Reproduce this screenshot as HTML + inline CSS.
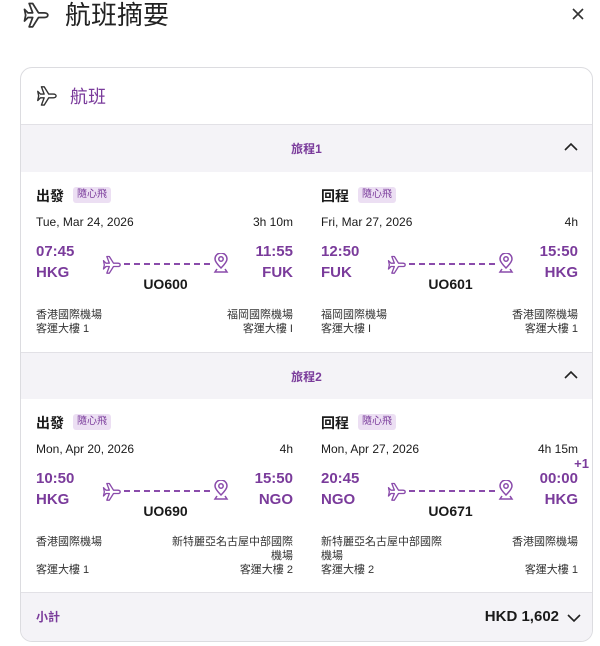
<!DOCTYPE html>
<html><head><meta charset="utf-8"><style>
*{margin:0;padding:0;box-sizing:border-box}
body{width:600px;height:646px;background:#fff;font-family:"Liberation Sans","Noto Sans CJK TC",sans-serif;color:#1a1a1a;position:relative;overflow:hidden}
.a{position:absolute;white-space:nowrap}
.card{position:absolute;left:20px;top:67px;width:573px;height:575px;border:1px solid #dcdce0;border-radius:12px;overflow:hidden;background:#fff}
.bar{position:absolute;left:0;width:100%;background:#f4f3f7;border-top:1px solid #e2e1e6}
.p{color:#7a3b9b}
.leg{position:absolute;width:257px;height:180px}
.leg .t{left:0;top:15px;font-size:14px;font-weight:bold}
.leg .tag{left:37px;top:16px;font-size:10px;color:#7a3b9b;background:#ecdff3;padding:1px 4px;border-radius:3px;line-height:14px}
.leg .d{top:44px;font-size:12px}
.leg .tm{top:72px;font-size:15px;font-weight:bold;color:#7a3b9b}
.leg .cd{top:93px;font-size:15px;font-weight:bold;color:#7a3b9b}
.leg .fn{top:105px;font-size:14px;font-weight:bold;left:0;width:257px;text-align:center;padding-left:2px}
.leg .ap{top:137px;font-size:11px;line-height:14px;color:#333}
.r{right:0;text-align:right}
.l{left:0}
.dash{position:absolute;left:88px;top:92px;width:86px;border-top:2px dashed #8a4bab}
</style></head><body>
<svg class="a" style="left:20px;top:0" width="30" height="28" viewBox="0 0 24 24" fill="none" stroke="#333" stroke-width="1.5" stroke-linejoin="round"><path d="M3 8 L6 11 L10 11 L7 3 L10 3 L15 11 L20 11 C22 11 23 12 23 13 C23 14 22 15 20 15 L15 15 L10 23 L7 23 L10 15 L6 15 L3 18 L4 13 Z"/></svg>
<div class="a" style="left:65px;top:-5px;font-size:26px;color:#222">航班摘要</div>
<svg class="a" style="left:572px;top:8px" width="12" height="12" viewBox="0 0 12 12"><path d="M1 1 L11 11 M11 1 L1 11" stroke="#333" stroke-width="1.6"/></svg>
<div class="card">
<svg class="a" style="left:14px;top:16px" width="22" height="22" viewBox="0 0 24 24" fill="none" stroke="#333" stroke-width="1.5" stroke-linejoin="round"><path d="M3 8 L6 11 L10 11 L7 3 L10 3 L15 11 L20 11 C22 11 23 12 23 13 C23 14 22 15 20 15 L15 15 L10 23 L7 23 L10 15 L6 15 L3 18 L4 13 Z"/></svg>
<div class="a p" style="left:49px;top:15px;font-size:18px">航班</div>
<div class="bar" style="top:56px;height:48px"><div class="a p" style="left:0;width:100%;text-align:center;top:15px;font-size:12px;font-weight:bold">旅程1</div><svg class="a" style="left:543px;top:17px" width="14" height="10" viewBox="0 0 14 10"><path d="M1 8 L7 2 L13 8" fill="none" stroke="#222" stroke-width="1.6"/></svg></div>
<div class="bar" style="top:284px;height:47px"><div class="a p" style="left:0;width:100%;text-align:center;top:15px;font-size:12px;font-weight:bold">旅程2</div><svg class="a" style="left:543px;top:17px" width="14" height="10" viewBox="0 0 14 10"><path d="M1 8 L7 2 L13 8" fill="none" stroke="#222" stroke-width="1.6"/></svg></div>
<div class="bar" style="top:524px;height:51px"><div class="a p" style="left:15px;top:15px;font-size:12px;font-weight:bold">小計</div><div class="a" style="right:33px;top:15px;font-size:15px;font-weight:bold">HKD 1,602</div><svg class="a" style="left:546px;top:20px" width="14" height="10" viewBox="0 0 14 10"><path d="M1 2 L7 8 L13 2" fill="none" stroke="#222" stroke-width="1.6"/></svg></div>
</div>
<div class="leg" style="left:36px;top:171px">
<div class="a t">出發</div><div class="a tag">隨心飛</div>
<div class="a d l">Tue, Mar 24, 2026</div><div class="a d r">3h 10m</div>
<div class="a tm l">07:45</div><div class="a tm r">11:55</div>
<div class="a cd l">HKG</div><div class="a cd r">FUK</div>
<svg class="a" style="left:64px;top:83px" width="22" height="20" viewBox="0 0 24 24" fill="none" stroke="#8a4bab" stroke-width="1.6" stroke-linejoin="round"><path d="M3 8 L6 11 L10 11 L7 3 L10 3 L15 11 L20 11 C22 11 23 12 23 13 C23 14 22 15 20 15 L15 15 L10 23 L7 23 L10 15 L6 15 L3 18 L4 13 Z"/></svg>
<div class="dash"></div>
<svg class="a" style="left:177px;top:82px" width="16" height="20" viewBox="0 0 16 20" fill="none" stroke="#8a4bab" stroke-width="1.5"><path d="M8 15 C4 11 2 8 2 6 A6 6 0 0 1 14 6 C14 8 12 11 8 15Z"/><circle cx="8" cy="6" r="2.2"/><path d="M4 16 L2 19 L14 19 L12 16"/></svg>
<div class="a fn">UO600</div>
<div class="a ap l">香港國際機場<br>客運大樓 1</div><div class="a ap r">福岡國際機場<br>客運大樓 I</div>
</div>
<div class="leg" style="left:321px;top:171px">
<div class="a t">回程</div><div class="a tag">隨心飛</div>
<div class="a d l">Fri, Mar 27, 2026</div><div class="a d r">4h</div>
<div class="a tm l">12:50</div><div class="a tm r">15:50</div>
<div class="a cd l">FUK</div><div class="a cd r">HKG</div>
<svg class="a" style="left:64px;top:83px" width="22" height="20" viewBox="0 0 24 24" fill="none" stroke="#8a4bab" stroke-width="1.6" stroke-linejoin="round"><path d="M3 8 L6 11 L10 11 L7 3 L10 3 L15 11 L20 11 C22 11 23 12 23 13 C23 14 22 15 20 15 L15 15 L10 23 L7 23 L10 15 L6 15 L3 18 L4 13 Z"/></svg>
<div class="dash"></div>
<svg class="a" style="left:177px;top:82px" width="16" height="20" viewBox="0 0 16 20" fill="none" stroke="#8a4bab" stroke-width="1.5"><path d="M8 15 C4 11 2 8 2 6 A6 6 0 0 1 14 6 C14 8 12 11 8 15Z"/><circle cx="8" cy="6" r="2.2"/><path d="M4 16 L2 19 L14 19 L12 16"/></svg>
<div class="a fn">UO601</div>
<div class="a ap l">福岡國際機場<br>客運大樓 I</div><div class="a ap r">香港國際機場<br>客運大樓 1</div>
</div>
<div class="leg" style="left:36px;top:398px">
<div class="a t">出發</div><div class="a tag">隨心飛</div>
<div class="a d l">Mon, Apr 20, 2026</div><div class="a d r">4h</div>
<div class="a tm l">10:50</div><div class="a tm r">15:50</div>
<div class="a cd l">HKG</div><div class="a cd r">NGO</div>
<svg class="a" style="left:64px;top:83px" width="22" height="20" viewBox="0 0 24 24" fill="none" stroke="#8a4bab" stroke-width="1.6" stroke-linejoin="round"><path d="M3 8 L6 11 L10 11 L7 3 L10 3 L15 11 L20 11 C22 11 23 12 23 13 C23 14 22 15 20 15 L15 15 L10 23 L7 23 L10 15 L6 15 L3 18 L4 13 Z"/></svg>
<div class="dash"></div>
<svg class="a" style="left:177px;top:82px" width="16" height="20" viewBox="0 0 16 20" fill="none" stroke="#8a4bab" stroke-width="1.5"><path d="M8 15 C4 11 2 8 2 6 A6 6 0 0 1 14 6 C14 8 12 11 8 15Z"/><circle cx="8" cy="6" r="2.2"/><path d="M4 16 L2 19 L14 19 L12 16"/></svg>
<div class="a fn">UO690</div>
<div class="a ap l">香港國際機場<br><br>客運大樓 1</div><div class="a ap r">新特麗亞名古屋中部國際<br>機場<br>客運大樓 2</div>
</div>
<div class="leg" style="left:321px;top:398px">
<div class="a t">回程</div><div class="a tag">隨心飛</div>
<div class="a d l">Mon, Apr 27, 2026</div><div class="a d r">4h 15m</div>
<div class="a p" style="right:-11px;top:58px;font-size:13px;font-weight:bold">+1</div>
<div class="a tm l">20:45</div><div class="a tm r">00:00</div>
<div class="a cd l">NGO</div><div class="a cd r">HKG</div>
<svg class="a" style="left:64px;top:83px" width="22" height="20" viewBox="0 0 24 24" fill="none" stroke="#8a4bab" stroke-width="1.6" stroke-linejoin="round"><path d="M3 8 L6 11 L10 11 L7 3 L10 3 L15 11 L20 11 C22 11 23 12 23 13 C23 14 22 15 20 15 L15 15 L10 23 L7 23 L10 15 L6 15 L3 18 L4 13 Z"/></svg>
<div class="dash"></div>
<svg class="a" style="left:177px;top:82px" width="16" height="20" viewBox="0 0 16 20" fill="none" stroke="#8a4bab" stroke-width="1.5"><path d="M8 15 C4 11 2 8 2 6 A6 6 0 0 1 14 6 C14 8 12 11 8 15Z"/><circle cx="8" cy="6" r="2.2"/><path d="M4 16 L2 19 L14 19 L12 16"/></svg>
<div class="a fn">UO671</div>
<div class="a ap l">新特麗亞名古屋中部國際<br>機場<br>客運大樓 2</div><div class="a ap r">香港國際機場<br><br>客運大樓 1</div>
</div>
</body></html>
